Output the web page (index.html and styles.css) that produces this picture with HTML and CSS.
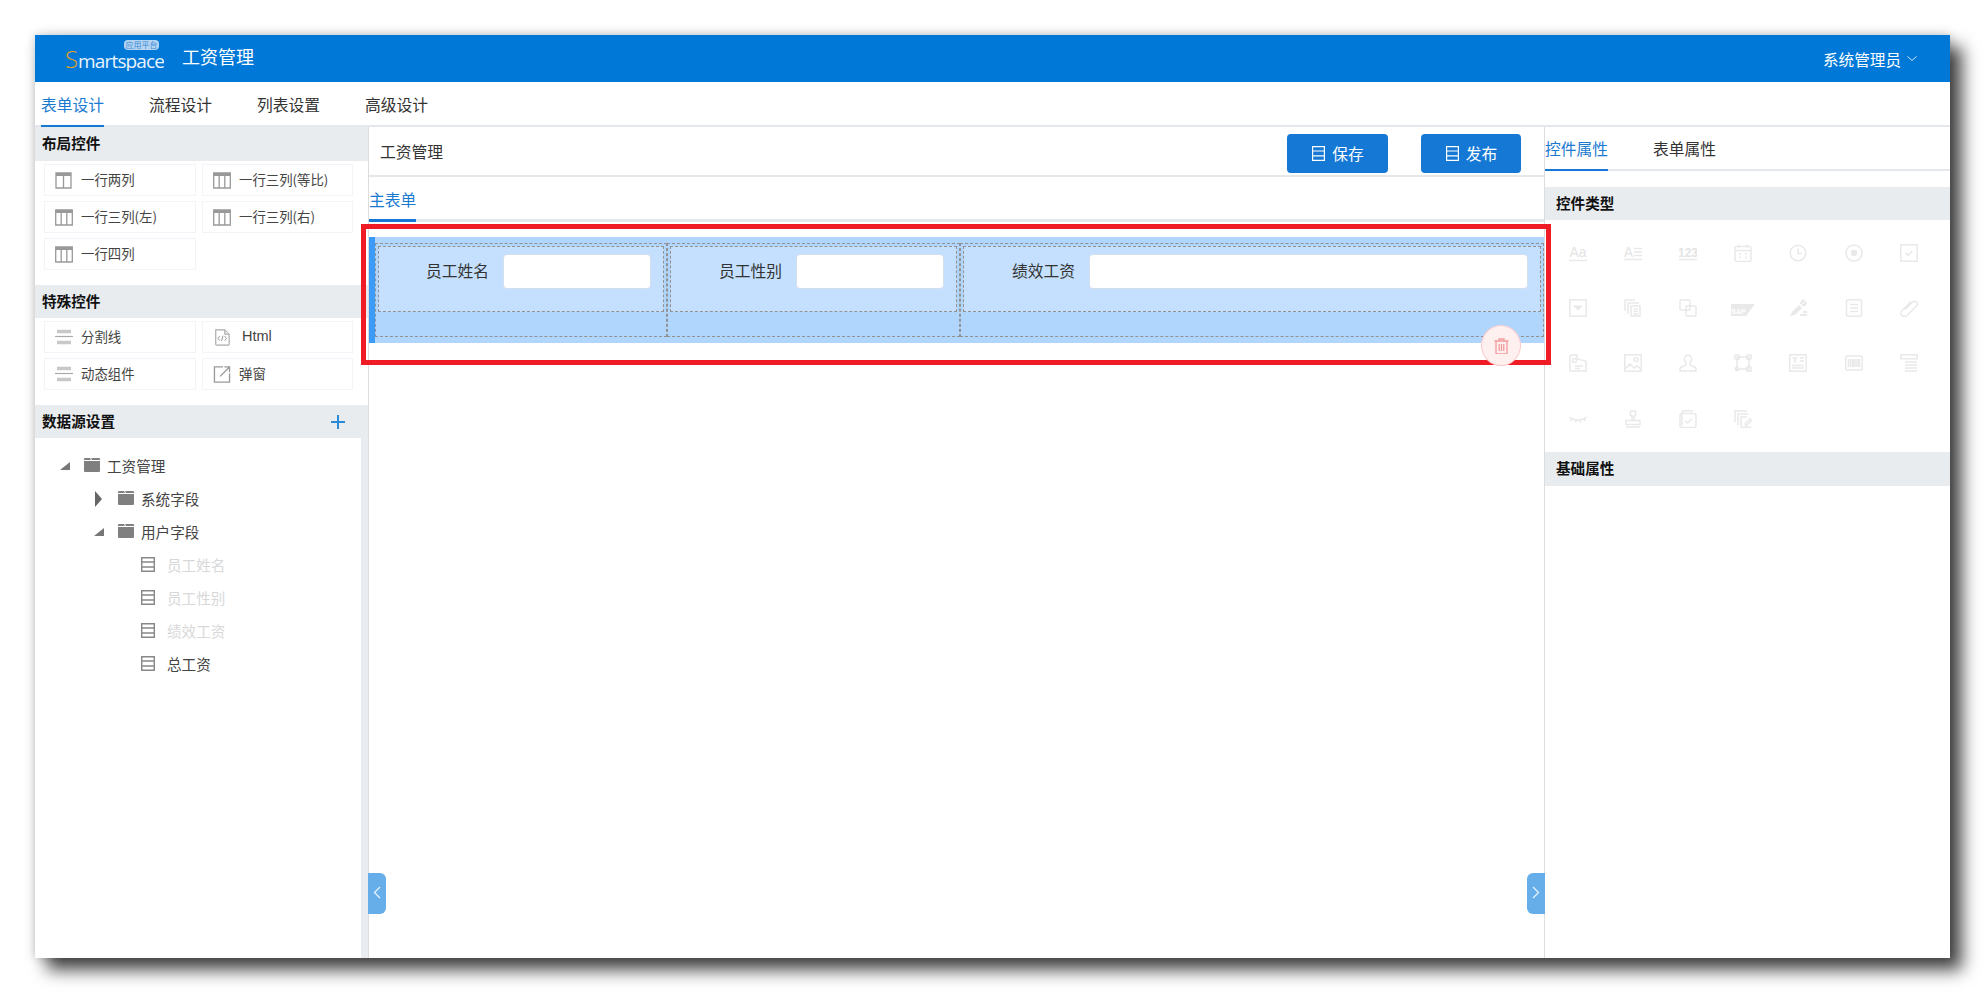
FILE: index.html
```html
<!DOCTYPE html>
<html lang="zh-CN">
<head>
<meta charset="utf-8">
<title>工资管理</title>
<link rel="stylesheet" href="styles.css">
</head>
<body>
<svg class="sprite" xmlns="http://www.w3.org/2000/svg">
  <symbol id="t2" viewBox="0 0 18 17"><path d="M1 1h15v15H1z" fill="none" stroke="#999" stroke-width="1.3"/><path d="M1 1h15v3H1z" fill="#999"/><path d="M8.5 4v12" stroke="#999" stroke-width="1.3"/></symbol>
  <symbol id="t3" viewBox="0 0 18 17"><path d="M.7 1h16.6v15H.7z" fill="none" stroke="#999" stroke-width="1.3"/><path d="M.7 1h16.6v3H.7z" fill="#999"/><path d="M6.2 4v12M11.8 4v12" stroke="#999" stroke-width="1.3"/></symbol>
  <symbol id="divider" viewBox="0 0 18 17"><path d="M2 2.500h14M2 13.500h14" stroke="#c8c8c8" stroke-width="3.500"/><path d="M0 7.500h18" stroke="#aaa" stroke-width="1.200"/></symbol>
  <symbol id="html" viewBox="0 0 18 19"><path d="M2 1h10l5 5v11a1 1 0 0 1-1 1H3a1 1 0 0 1-1-1z" fill="none" stroke="#aaa" stroke-width="1.3"/><path d="M12 1v5h5" fill="#ddd" stroke="#aaa"/><path d="M6.5 8l-2 2.5 2 2.5M12 8l2 2.5-2 2.5M10 7.5l-1.500 6" fill="none" stroke="#888"/></symbol>
  <symbol id="popup" viewBox="0 0 18 18"><path d="M10 1H1v16h16V8" fill="none" stroke="#999" stroke-width="1.4"/><path d="M7 11l10-10M11.500 1H17v5.500" fill="none" stroke="#999" stroke-width="1.4"/></symbol>
  <symbol id="folder" viewBox="0 0 16 15"><path d="M0 2a1 1 0 0 1 1-1h5l1 2H0zM0 4h16v10a1 1 0 0 1-1 1H1a1 1 0 0 1-1-1z" fill="#7f7f7f"/><path d="M7 1h8a1 1 0 0 1 1 1v1H8z" fill="#7f7f7f"/></symbol>
  <symbol id="field" viewBox="0 0 14 15"><path d="M.7.7h12.600v13.600H.7z" fill="none" stroke="#888" stroke-width="1.4"/><path d="M.7 5h12.600M.7 10h12.600" stroke="#888" stroke-width="1.400"/></symbol>
  <symbol id="list" viewBox="0 0 13 15"><path d="M.6.6h11.800v13.800H.6z" fill="none" stroke="#fff" stroke-width="1.200"/><path d="M.6 5h11.800M.6 9.800h11.800" stroke="#fff" stroke-width="1.200"/></symbol>
  <symbol id="trash" viewBox="0 0 15 16"><path d="M.5 3h14M5 3V1h5v2M2 3v12a.8.8 0 0 0 .8.8h9.400A.8.8 0 0 0 13 15V3M5.200 6v7M7.500 6v7M9.800 6v7" fill="none" stroke="#f39a9c" stroke-width="1.300"/></symbol>
  <symbol id="p-cal" viewBox="0 0 18 18"><rect x="1" y="2.500" width="16" height="15" rx="2"/><path d="M1 6.500h16M5 .5v3M13 .5v3M5 10h2M11 10h2M5 13.500h2M11 13.500h2"/></symbol>
  <symbol id="p-clock" viewBox="0 0 18 18"><circle cx="9" cy="9" r="7.800"/><path d="M9 4.500V9.500h4"/></symbol>
  <symbol id="p-radio" viewBox="0 0 18 18"><circle cx="9" cy="9" r="8"/><circle cx="9" cy="9" r="3.200" class="solid"/></symbol>
  <symbol id="p-check" viewBox="0 0 18 18"><rect x=".8" y=".8" width="16.400" height="16.400"/><path d="M5.500 9l2.500 2.500 4.500-4.500"/></symbol>
  <symbol id="p-select" viewBox="0 0 18 18"><rect x=".8" y=".8" width="16.400" height="16.400"/><path d="M4 6.500h10L9 11.500z" class="solid"/></symbol>
  <symbol id="p-copy" viewBox="0 0 18 18"><path d="M1 12V1h10M4 15V4h11M7 17V7h9v10zM9.500 10h4.500M9.500 12.500h4.500M9.500 15h4.500"/></symbol>
  <symbol id="p-link" viewBox="0 0 18 18"><path d="M7 11H2a1 1 0 0 1-1-1V2a1 1 0 0 1 1-1h8a1 1 0 0 1 1 1v5M11 7h5a1 1 0 0 1 1 1v8a1 1 0 0 1-1 1H8a1 1 0 0 1-1-1v-5M7 7v4h4V7z"/></symbol>
  <symbol id="p-pen" viewBox="0 0 18 18"><path d="M1 17l2-4 7-7 3 3-7 7z" class="solid"/><path d="M12 4l2-2.500 3 3-2 2zM11 16h7M14 13h4" stroke-width="2"/></symbol>
  <symbol id="p-doc" viewBox="0 0 18 18"><rect x="1.500" y=".8" width="15" height="16.400" rx="2"/><path d="M5 5.500h8M5 9h8M5 12.500h8"/></symbol>
  <symbol id="p-clip" viewBox="0 0 18 18"><path d="M5 10.500l7.500-7.500a2.800 2.800 0 0 1 4 4L7 16.500a3.500 3.500 0 0 1-5-5L11 2.500"/></symbol>
  <symbol id="p-tag" viewBox="0 0 18 18"><path d="M1 3a2 2 0 0 1 2-2h5v4l9 2v10H1zM6 12h8M6 14.500h5"/><circle cx="5.500" cy="6.500" r="2"/></symbol>
  <symbol id="p-img" viewBox="0 0 18 18"><rect x=".8" y=".8" width="16.400" height="16.400"/><circle cx="12" cy="5.500" r="2"/><path d="M1 15l5-5 4 4 3-2 4 3"/></symbol>
  <symbol id="p-user" viewBox="0 0 18 18"><path d="M9 1a3.800 3.800 0 0 0-2.500 6.500c.8 1 .8 3-.5 4-1.500 1-5 1.200-5 3.500v2h16v-2c0-2.300-3.500-2.500-5-3.500-1.300-1-1.300-3-.5-4A3.800 3.800 0 0 0 9 1z"/></symbol>
  <symbol id="p-nodes" viewBox="0 0 18 18"><rect x="3" y="3" width="12" height="12"/><circle cx="3" cy="3" r="2.500"/><circle cx="15" cy="3" r="2.500"/><circle cx="3" cy="15" r="2.500" class="solid"/><circle cx="15" cy="15" r="2.500"/></symbol>
  <symbol id="p-tbox" viewBox="0 0 18 18"><rect x=".8" y=".8" width="16.400" height="16.400"/><path d="M3.500 4h5M6 4v5M11 4h4M11 7h4M3 11.500h12M3 14h12"/></symbol>
  <symbol id="p-bar" viewBox="0 0 18 18"><rect x=".8" y="2" width="16.400" height="14" rx="1.500"/><path d="M3.500 5v8M5.500 5v8M7.500 5v8M9 5v8M11 5v8M13 5v8M14.500 5v8"/></symbol>
  <symbol id="p-lines" viewBox="0 0 18 18"><rect x=".8" y=".8" width="16.400" height="4"/><path d="M5 8h12M5 11h12M5 14h12M5 17h12"/></symbol>
  <symbol id="p-eye" viewBox="0 0 18 18"><path d="M.5 7c4 4 13 4 17 0M3 9l-1.500 2M7 10.500l-.5 2M11 10.500l.5 2M15 9l1.500 2"/></symbol>
  <symbol id="p-stamp" viewBox="0 0 18 18"><circle cx="9" cy="3.500" r="2.800"/><path d="M8 6.500v4h2v-4M2 10.500h14v4H2zM2 17h14"/></symbol>
  <symbol id="p-ccheck" viewBox="0 0 18 18"><path d="M3 15V2a1 1 0 0 1 1-1h10"/><rect x="1" y="3.500" width="16" height="14" rx="2"/><path d="M6 10.500l2.500 2.500 4.500-4.500"/></symbol>
  <symbol id="p-cedit" viewBox="0 0 18 18"><path d="M1 12V1h12M4 15V4h10M7 17.300V7h6M17 17.300H7M11 14l5-5 1.500 1.500-5 5z"/></symbol>
</svg>

<div class="window">
  <header class="topbar">
    <div class="logo">
      <span class="logo-word"><span class="logo-s">S</span>martspace</span>
      <span class="logo-badge">应用平台</span>
    </div>
    <div class="app-title">工资管理</div>
    <div class="user">系统管理员<svg class="user-caret" viewBox="0 0 10 5"><path d="M.5.5L5 4.500 9.500.5" fill="none" stroke="#d5e9fa"/></svg></div>
  </header>

  <nav class="nav">
    <a class="nav-item active">表单设计</a>
    <a class="nav-item">流程设计</a>
    <a class="nav-item">列表设置</a>
    <a class="nav-item">高级设计</a>
  </nav>

  <main class="main">
    <aside class="left">
      <div class="sec-head sec-first">布局控件</div>
      <div class="widgets">
        <div class="widget"><svg class="w-icon"><use href="#t2"/></svg>一行两列</div>
        <div class="widget"><svg class="w-icon"><use href="#t3"/></svg>一行三列(等比)</div>
        <div class="widget"><svg class="w-icon"><use href="#t3"/></svg>一行三列(左)</div>
        <div class="widget"><svg class="w-icon"><use href="#t3"/></svg>一行三列(右)</div>
        <div class="widget"><svg class="w-icon"><use href="#t3"/></svg>一行四列</div>
      </div>
      <div class="sec-head sec-next">特殊控件</div>
      <div class="widgets">
        <div class="widget"><svg class="w-icon"><use href="#divider"/></svg>分割线</div>
        <div class="widget"><svg class="w-icon"><use href="#html"/></svg><span class="w-en">Html</span></div>
        <div class="widget"><svg class="w-icon"><use href="#divider"/></svg>动态组件</div>
        <div class="widget"><svg class="w-icon"><use href="#popup"/></svg>弹窗</div>
      </div>
      <div class="sec-head sec-next sec-ds">数据源设置<svg class="plus" viewBox="0 0 14 14"><path d="M7 0v14M0 7h14" stroke="#2a8ad8" stroke-width="2"/></svg></div>
      <div class="tree">
        <div class="tree-row lvl0"><svg class="arrow" viewBox="0 0 10 8"><path d="M10 0v8H0z" fill="#777"/></svg><svg class="folder"><use href="#folder"/></svg>工资管理</div>
        <div class="tree-row lvl1"><svg class="arrow arrow-right" viewBox="0 0 7 16"><path d="M0 0l7 8-7 8z" fill="#666"/></svg><svg class="folder"><use href="#folder"/></svg>系统字段</div>
        <div class="tree-row lvl1"><svg class="arrow" viewBox="0 0 10 8"><path d="M10 0v8H0z" fill="#777"/></svg><svg class="folder"><use href="#folder"/></svg>用户字段</div>
        <div class="tree-row lvl2 off"><svg class="field"><use href="#field"/></svg>员工姓名</div>
        <div class="tree-row lvl2 off"><svg class="field"><use href="#field"/></svg>员工性别</div>
        <div class="tree-row lvl2 off"><svg class="field"><use href="#field"/></svg>绩效工资</div>
        <div class="tree-row lvl2"><svg class="field"><use href="#field"/></svg>总工资</div>
      </div>
    </aside>

    <section class="center">
      <div class="titlebar">
        <span class="form-name">工资管理</span>
        <button class="btn btn-save"><svg class="btn-icon"><use href="#list"/></svg>保存</button>
        <button class="btn btn-pub"><svg class="btn-icon"><use href="#list"/></svg>发布</button>
      </div>
      <div class="subtabs"><a class="subtab">主表单</a></div>
      <div class="canvas">
        <div class="form-row">
          <div class="cell cell-a"><div class="cell-in"><label class="lbl">员工姓名</label><span class="inp"></span></div></div>
          <div class="cell cell-c"><div class="cell-in"><label class="lbl">员工性别</label><span class="inp"></span></div></div>
          <div class="cell cell-b"><div class="cell-in"><label class="lbl">绩效工资</label><span class="inp"></span></div></div>
        </div>
        <div class="redbox"></div>
        <div class="del"><svg class="del-icon"><use href="#trash"/></svg></div>
      </div>
      <div class="handle handle-l"><svg class="chev" viewBox="0 0 8 13"><path d="M7 1L1.500 6.500 7 12" fill="none" stroke="#e8f3fc" stroke-width="1.300"/></svg></div>
      <div class="handle handle-r"><svg class="chev" viewBox="0 0 8 13"><path d="M1 1l5.500 5.500L1 12" fill="none" stroke="#e8f3fc" stroke-width="1.300"/></svg></div>
    </section>

    <aside class="right">
      <div class="rtabs"><a class="rtab active">控件属性</a><a class="rtab">表单属性</a></div>
      <div class="sec-head r-head r-first">控件类型</div>
      <div class="props">
        <svg class="prop" viewBox="0 0 18 18"><text x="9" y="13" class="pt">Aa</text><path d="M0 16.500h18"/></svg>
        <svg class="prop" viewBox="0 0 18 18"><text x="4.500" y="13" class="pt">A</text><path d="M10 4.500h8M10 8h8M10 11.500h8M0 15.500h18"/></svg>
        <svg class="prop" viewBox="0 0 18 18"><text x="9" y="13" class="pt pt-n">123</text><path d="M0 15.500h18"/></svg>
        <svg class="prop"><use href="#p-cal"/></svg>
        <svg class="prop"><use href="#p-clock"/></svg>
        <svg class="prop"><use href="#p-radio"/></svg>
        <svg class="prop"><use href="#p-check"/></svg>
        <svg class="prop"><use href="#p-select"/></svg>
        <svg class="prop"><use href="#p-copy"/></svg>
        <svg class="prop"><use href="#p-link"/></svg>
        <svg class="prop prop-sap" viewBox="0 0 24 18"><path d="M0 5h24l-9 12H0z" class="solid"/><text x="7.500" y="14.500" class="pt-s">SAP</text></svg>
        <svg class="prop"><use href="#p-pen"/></svg>
        <svg class="prop"><use href="#p-doc"/></svg>
        <svg class="prop"><use href="#p-clip"/></svg>
        <svg class="prop"><use href="#p-tag"/></svg>
        <svg class="prop"><use href="#p-img"/></svg>
        <svg class="prop"><use href="#p-user"/></svg>
        <svg class="prop"><use href="#p-nodes"/></svg>
        <svg class="prop"><use href="#p-tbox"/></svg>
        <svg class="prop"><use href="#p-bar"/></svg>
        <svg class="prop"><use href="#p-lines"/></svg>
        <svg class="prop"><use href="#p-eye"/></svg>
        <svg class="prop"><use href="#p-stamp"/></svg>
        <svg class="prop"><use href="#p-ccheck"/></svg>
        <svg class="prop"><use href="#p-cedit"/></svg>
      </div>
      <div class="sec-head r-head">基础属性</div>
    </aside>
  </main>
</div>
</body>
</html>
```

FILE: styles.css
```css
* { box-sizing: border-box; }
html, body { margin: 0; height: 100%; background: #fff; overflow: hidden; }
body {
  padding: 35px;
  font-family: "Noto Sans CJK SC", "Liberation Sans", sans-serif;
  color: #333;
}
.sprite { position: absolute; width: 0; height: 0; }

.window {
  width: 1915px;
  height: 923px;
  background: #fff;
  display: flex;
  flex-direction: column;
  box-shadow: 12px 12px 16px rgba(0,0,0,.72), 0 0 10px rgba(0,0,0,.22);
}

/* top bar */
.topbar {
  height: 47px;
  flex: none;
  background: #0078d7;
  color: #fff;
  display: flex;
  align-items: center;
  padding-left: 30px;
}
.logo {
  position: relative;
  width: 94px;
  height: 47px;
  margin-right: 23px;
}
.logo-word {
  position: absolute;
  left: 0;
  top: 12px;
  font-family: "Open Sans", sans-serif;
  font-weight: 400;
  font-size: 19px;
  letter-spacing: -.85px;
  line-height: 24px;
  white-space: nowrap;
  color: #eaf4fc;
  clip-path: inset(0 0 2px 0);
}
.logo-s { color: #e0a31c; font-size: 24px; font-weight: 300; letter-spacing: 0; }
.logo-badge {
  position: absolute;
  right: 0;
  top: 5px;
  width: 35px;
  height: 10px;
  border-radius: 4px;
  background: #b5d5f2;
  color: #3a8ad6;
  font-size: 8px;
  line-height: 10px;
  text-align: center;
  white-space: nowrap;
}
.app-title { font-size: 18px; line-height: 43px; height: 47px; }
.user {
  margin-left: auto;
  margin-right: 33px;
  font-size: 15.600px;
  display: flex;
  align-items: center;
}
.user-caret { width: 10px; height: 5px; margin-left: 6px; }

/* main nav */
.nav {
  height: 45px;
  flex: none;
  display: flex;
  gap: 45px;
  padding-left: 6px;
  border-bottom: 2px solid #e4e8ed;
}
.nav-item {
  height: 45px;
  font-size: 15.750px;
  line-height: 46px;
  padding: 0;
}
.nav-item.active { color: #1a7ad0; border-bottom: 2px solid #1478d4; }

.main { flex: 1; display: flex; min-height: 0; }

/* left */
.left { width: 334px; flex: none; display: flex; flex-direction: column; border-right: 1px solid #ddd; }
.sec-head {
  background: #e8ecef;
  color: #111;
  font-size: 14.600px;
  font-weight: 700;
  height: 34px;
  line-height: 32px;
  padding-left: 7px;
  flex: none;
}
.left .sec-head { line-height: 31px; }
.sec-next { height: 33px; margin-top: 15px; }
.widgets {
  display: grid;
  grid-template-columns: 152px 151px;
  grid-auto-rows: 32px;
  gap: 5px 6px;
  padding: 3px 0 0 9px;
}
.widget {
  border: 1px solid #f2f4f8;
  display: flex;
  align-items: center;
  padding: 0 0 2px 10px;
  font-size: 13.400px;
  color: #444;
}
.w-icon { width: 18px; height: 17px; margin: 2px 8px 0 0; flex: none; }
.w-en { font-family: "Liberation Sans", sans-serif; font-size: 14.500px; margin-left: 3px; }
.left .sec-ds { display: flex; justify-content: space-between; align-items: center; padding: 0 23px 2px 7px; }
.plus { width: 14px; height: 14px; margin-top: 2px; }
.tree {
  flex: 1;
  border-right: 7px solid #e9edf1;
  padding-top: 11px;
}
.tree-row {
  height: 33px;
  display: flex;
  align-items: center;
  font-size: 14.600px;
  color: #444;
}
.lvl0 { padding-left: 25px; }
.lvl1 { padding-left: 59px; }
.lvl2 { padding-left: 106px; }
.off { color: #d8d8d8; }
.arrow { width: 10px; height: 8px; margin-right: 14px; flex: none; }
.arrow-right { width: 7px; height: 16px; margin-left: 1px; margin-right: 16px; }
.folder { width: 16px; height: 15px; margin-right: 7px; flex: none; margin-top: -3px; }
.field { width: 14px; height: 15px; margin-right: 12px; flex: none; }

/* center */
.center { flex: 1; min-width: 0; position: relative; display: flex; flex-direction: column; }
.titlebar {
  height: 50px;
  flex: none;
  border-bottom: 2px solid #e4e8ed;
  display: flex;
  align-items: flex-start;
  padding: 7px 23px 0 11px;
}
.form-name { font-size: 15.750px; line-height: 36px; margin-right: auto; }
.btn {
  width: 100px;
  height: 39px;
  border: 0;
  border-radius: 4px;
  background: #1478d4;
  color: #fff;
  font: 15.750px "Noto Sans CJK SC", sans-serif;
  display: flex;
  align-items: center;
  justify-content: center;
  gap: 7px;
  padding: 0 0 1px 1px;
}
.btn-save { width: 101px; margin-right: 33px; }
.btn-icon { width: 13px; height: 15px; margin-top: 1px; }
.subtabs { height: 45px; flex: none; border-bottom: 3px solid #e4e8ed; }
.subtab {
  display: inline-block;
  height: 45px;
  font-size: 15.750px;
  line-height: 46px;
  color: #1a7ad0;
  border-bottom: 3px solid #1478d4;
}
.canvas { flex: 1; position: relative; padding-top: 15px; }
.form-row {
  display: flex;
  height: 106px;
  background: #b0d6fd;
  border-left: 6px solid #3c9bf7;
  padding: 6px 0;
}
.cell { border: 1px dashed #929292; padding: 2px; height: 94px; }
.cell-a { width: 292px; }
.cell-c { width: 293px; }
.cell-b { flex: 1; }
.cell-in {
  height: 66px;
  border: 1px dashed #929292;
  background: #c4e0fe;
  display: flex;
  align-items: flex-start;
  padding: 7px 12px 0 0;
}
.lbl { width: 111px; flex: none; text-align: right; font-size: 15.750px; line-height: 33px; margin-right: 14px; }
.cell-a .lbl { width: 110px; }
.inp { flex: 1; height: 35px; background: #fff; border: 1px solid #d4dfee; border-radius: 4px; }
.redbox { position: absolute; left: -8px; top: 2px; right: -7px; height: 141px; border: 5px solid #ef1c25; pointer-events: none; }
.del {
  position: absolute;
  left: 1112px;
  top: 103px;
  width: 40px;
  height: 41px;
  border-radius: 50%;
  background: #fff0f0;
  border: 1px solid #fbc9cb;
  display: flex;
  align-items: center;
  justify-content: center;
}
.del-icon { width: 15px; height: 16px; }
.handle {
  position: absolute;
  top: 746px;
  width: 18px;
  height: 41px;
  background: #66aeea;
  display: flex;
  align-items: center;
  justify-content: center;
}
.handle-l { left: -1px; border-radius: 0 6px 6px 0; }
.handle-r { right: -1px; border-radius: 6px 0 0 6px; z-index: 1; }
.chev { width: 8px; height: 13px; margin-top: -2px; }

/* right */
.right { width: 406px; flex: none; border-left: 1px solid #ddd; display: flex; flex-direction: column; }
.rtabs { height: 44px; flex: none; display: flex; gap: 45px; border-bottom: 2px solid #e4e8ed; }
.rtab { height: 44px; font-size: 15.750px; line-height: 44px; }
.rtab.active { color: #1a7ad0; border-bottom: 2px solid #1478d4; }
.r-head { padding-left: 11px; }
.r-first { margin-top: 16px; height: 33px; }
.props {
  display: grid;
  grid-template-columns: repeat(7, 55.200px);
  grid-auto-rows: 55.300px;
  justify-items: center;
  align-items: center;
  padding: 5px 0 0 5px;
  height: 232px;
  flex: none;
}
.prop { width: 18px; height: 18px; fill: none; stroke: #e9e9e9; stroke-width: 1.500; }
.prop-sap { width: 24px; }
.solid { fill: #e9e9e9; stroke: none; }
.pt { font: 14px "Liberation Sans", sans-serif; fill: #e4e4e4; stroke: none; text-anchor: middle; }
.pt-n { font-size: 12px; font-weight: 700; }
.pt-s { font: 700 7px "Liberation Sans", sans-serif; fill: #fff; stroke: none; text-anchor: middle; }
```
